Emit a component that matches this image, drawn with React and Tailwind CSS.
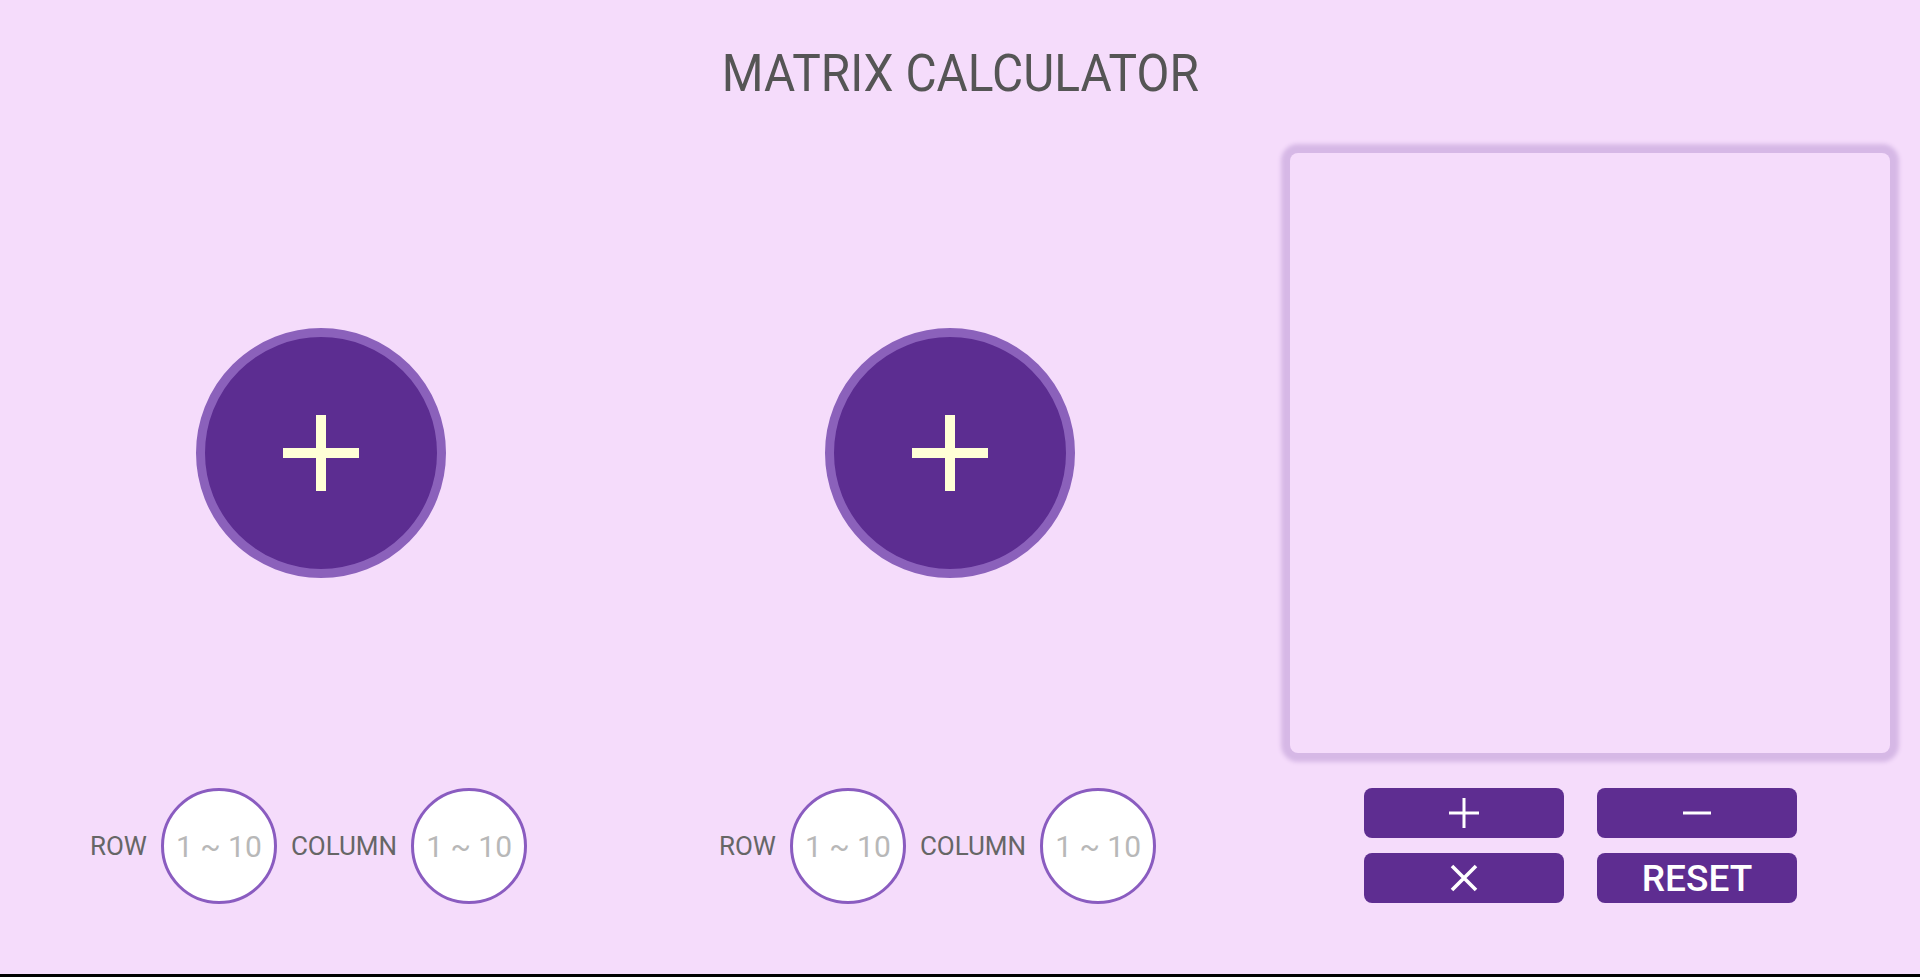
import { useState } from "react";

function BigPlus() {
  return (
    <svg width="76" height="76" viewBox="0 0 76 76">
      <rect x="0" y="33" width="76" height="10" fill="#ffffd6" />
      <rect x="33" y="0" width="10" height="76" fill="#ffffd6" />
    </svg>
  );
}

function MatrixSlot() {
  return (
    <button className="w-[250px] h-[250px] rounded-full bg-[#5c2d91] border-[9px] border-[#8b61bb] flex items-center justify-center cursor-pointer">
      <BigPlus />
    </button>
  );
}

function SizeInputs() {
  const [row, setRow] = useState("");
  const [col, setCol] = useState("");
  const inputCls =
    "w-[116px] h-[116px] rounded-full bg-white border-[3px] border-[#8a5cc0] text-center text-[30px] text-[#555] placeholder:text-[#b8b8b8] outline-none";

  return (
    <div className="flex items-center gap-[14px] pr-[24px] text-[26px] text-[#666]">
      <span>ROW</span>
      <input
        value={row}
        onChange={(e) => setRow(e.target.value)}
        placeholder="1 ~ 10"
        className={inputCls}
      />
      <span>COLUMN</span>
      <input
        value={col}
        onChange={(e) => setCol(e.target.value)}
        placeholder="1 ~ 10"
        className={inputCls}
      />
    </div>
  );
}

function OpButton({ children }) {
  return (
    <button className="w-[200px] h-[50px] rounded-[8px] bg-[#5e2d91] text-white text-[37px] leading-none flex items-center justify-center cursor-pointer">
      {children}
    </button>
  );
}

export default function App() {
  return (
    <div className="h-[977px] bg-[#f5dcfb] border-b-[3px] border-black font-['Roboto',sans-serif] flex flex-col">
      <div className="h-[148px] flex items-center justify-center">
        <h1 className="text-[52px] leading-none text-[#555] font-normal scale-x-[0.92]">
          MATRIX CALCULATOR
        </h1>
      </div>

      <div className="mt-[5px] h-[600px] flex pl-[6px]">
        <div className="w-[629px] flex items-center justify-center">
          <MatrixSlot />
        </div>
        <div className="w-[629px] flex items-center justify-center">
          <MatrixSlot />
        </div>
        <div className="flex-1 pl-[26px]">
          <div className="w-[600px] h-[600px] rounded-[8px] bg-[#f5dcfb] shadow-[0_0_4px_9px_#d6b8e6]" />
        </div>
      </div>

      <div className="mt-[35px] flex pl-[6px]">
        <div className="w-[629px] h-[116px] flex items-center justify-center">
          <SizeInputs />
        </div>
        <div className="w-[629px] h-[116px] flex items-center justify-center">
          <SizeInputs />
        </div>
        <div className="flex-1 pl-[100px]">
          <div className="grid grid-cols-[200px_200px] gap-x-[33px] gap-y-[15px]">
            <OpButton>
              <svg width="30" height="30" viewBox="0 0 30 30">
                <rect x="0" y="13.5" width="30" height="3" fill="white" />
                <rect x="13.5" y="0" width="3" height="30" fill="white" />
              </svg>
            </OpButton>
            <OpButton>
              <svg width="28" height="4" viewBox="0 0 28 4">
                <rect x="0" y="0.5" width="28" height="3" fill="white" />
              </svg>
            </OpButton>
            <OpButton>
              <svg width="28" height="28" viewBox="0 0 28 28">
                <path d="M2 2 L26 26 M26 2 L2 26" stroke="white" strokeWidth="3.6" />
              </svg>
            </OpButton>
            <OpButton>
              <span className="font-medium">RESET</span>
            </OpButton>
          </div>
        </div>
      </div>
    </div>
  );
}
